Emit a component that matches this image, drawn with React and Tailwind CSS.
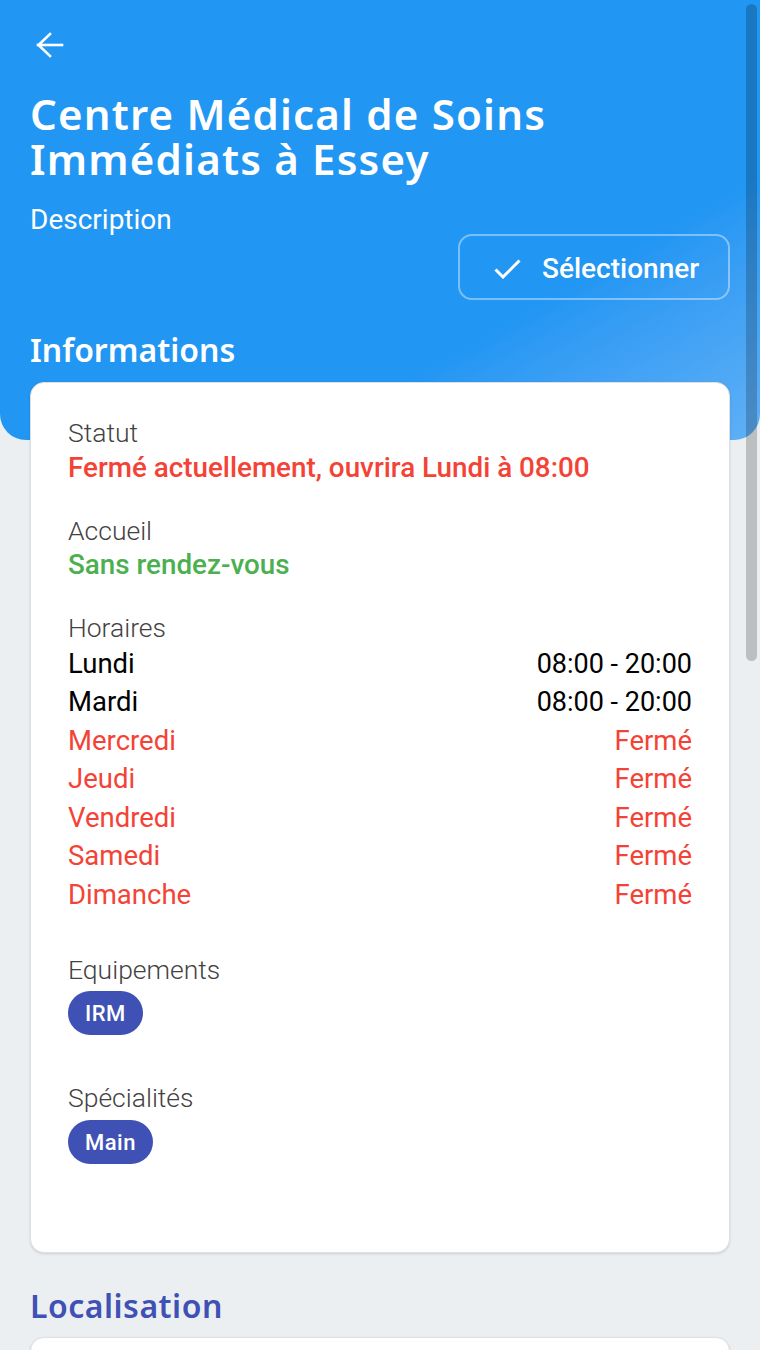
import React from 'react';

const HOURS = [
  { day: 'Lundi', time: '08:00 - 20:00', open: true },
  { day: 'Mardi', time: '08:00 - 20:00', open: true },
  { day: 'Mercredi', time: 'Fermé', open: false },
  { day: 'Jeudi', time: 'Fermé', open: false },
  { day: 'Vendredi', time: 'Fermé', open: false },
  { day: 'Samedi', time: 'Fermé', open: false },
  { day: 'Dimanche', time: 'Fermé', open: false },
];

const heading = { fontFamily: '"Noto Sans", Lato, sans-serif' };
const body = { fontFamily: 'Roboto, "Liberation Sans", sans-serif' };

const Label = ({ children }) => (
  <div className="text-[26.5px] leading-[34px] font-light text-[#424242]">{children}</div>
);

const Chip = ({ children }) => (
  <span className="inline-flex h-[44px] items-center rounded-full bg-[#3f51b5] px-[17px] text-[22px] font-medium tracking-[0.5px] text-white">
    {children}
  </span>
);

export default function App() {
  return (
    <div className="min-h-[1350px] bg-[#eceff1]" style={body}>
      {/* header */}
      <div className="rounded-b-[26px] bg-linear-to-br from-[#2196f3] from-70% to-[#5fb0f6] px-[30px] pt-[32px] pb-[70px] text-white">
        <button type="button" className="block h-[26px] w-[28px] pl-[6px]">
          <svg width="28" height="26" viewBox="0 0 28 26" fill="none" stroke="white" strokeWidth="2.6" strokeLinecap="square">
            <path d="M2 13H26" />
            <path d="M14 2L2.5 13L14 24" />
          </svg>
        </button>
        <h1 className="mt-[33px] text-[42px] leading-[45px] font-semibold tracking-[1.2px]" style={heading}>
          Centre Médical de Soins
          <br />
          Immédiats à Essey
        </h1>
        <p className="mt-[25px] text-[28px] leading-[28px]">Description</p>
        <div className="flex justify-end">
          <button
            type="button"
            className="flex h-[66px] w-[272px] items-center gap-[21px] rounded-[14px] border-2 border-white/40 pt-[3px] pl-[34px] text-[28px] font-medium"
          >
            <svg width="27" height="20" viewBox="0 0 27 20" fill="none" stroke="white" strokeWidth="3">
              <path d="M1.5 10.5L9 18L25.5 1.5" />
            </svg>
            Sélectionner
          </button>
        </div>
        <h2 className="mt-[30px] text-[32px] leading-[40px] font-semibold" style={heading}>
          Informations
        </h2>
      </div>

      {/* informations card */}
      <div className="relative -mt-[58px] px-[30px]">
        <div className="rounded-[14px] border border-[#e0e0e0] bg-white px-[37px] pt-[33px] pb-[88px] shadow-sm">
          <Label>Statut</Label>
          <div className="text-[27.8px] leading-[35px] font-medium text-[#f44336]">
            Fermé actuellement, ouvrira Lundi à 08:00
          </div>

          <div className="mt-[28.5px]">
            <Label>Accueil</Label>
            <div className="text-[27.8px] leading-[34px] font-medium text-[#4caf50]">Sans rendez-vous</div>
          </div>

          <div className="mt-[29px]">
            <Label>Horaires</Label>
            {HOURS.map((h) => (
              <div
                key={h.day}
                className={`flex justify-between text-[27.5px] leading-[38.6px] ${h.open ? 'text-black' : 'text-[#f44336]'}`}
              >
                <span>{h.day}</span>
                <span className={h.open ? 'text-[27px]' : ''}>{h.time}</span>
              </div>
            ))}
          </div>

          <div className="mt-[38.5px]">
            <Label>Equipements</Label>
            <div className="mt-[4px]">
              <Chip>IRM</Chip>
            </div>
          </div>

          <div className="mt-[46px]">
            <Label>Spécialités</Label>
            <div className="mt-[5px]">
              <Chip>Main</Chip>
            </div>
          </div>
        </div>
      </div>

      {/* localisation */}
      <div className="px-[30px]">
        <h2 className="mt-[33px] text-[32px] leading-[40px] font-semibold tracking-[0.5px] text-[#3f51b5]" style={heading}>
          Localisation
        </h2>
        <div className="mt-[11px] h-[300px] rounded-[14px] border border-[#e0e0e0] bg-white shadow-sm" />
      </div>

      {/* overlay scrollbar */}
      <div className="fixed top-[4px] right-[3px] h-[657px] w-[11px] rounded-full bg-black/20" />
    </div>
  );
}
